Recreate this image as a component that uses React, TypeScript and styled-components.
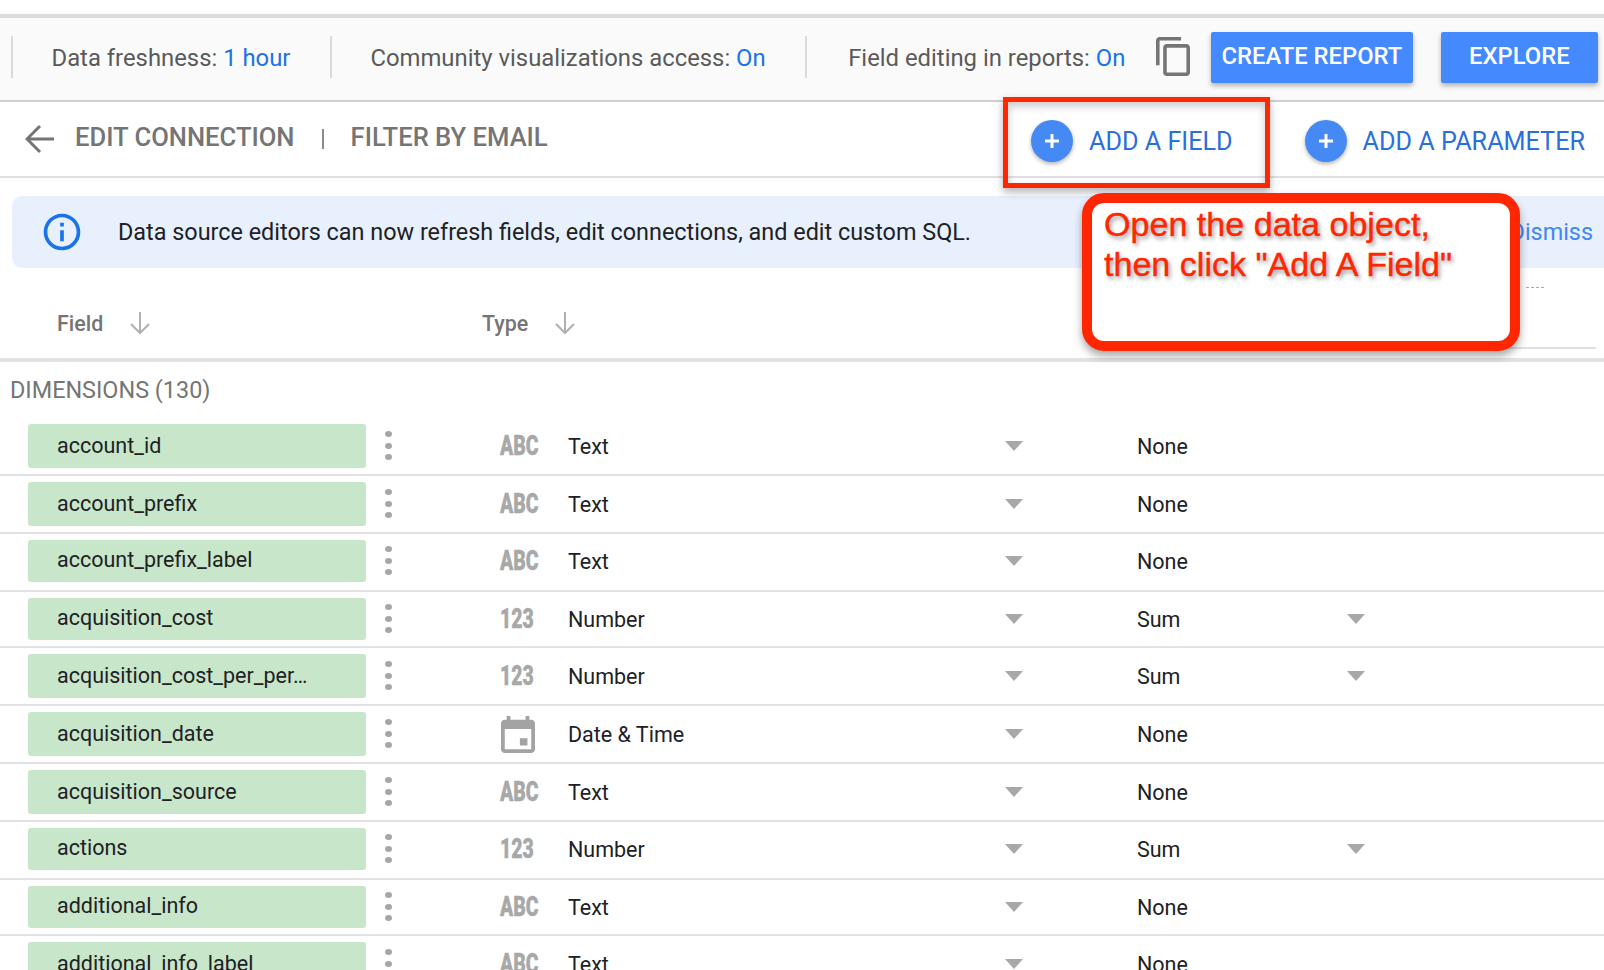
import React from "react";
import styled, { createGlobalStyle } from "styled-components";

const Global = createGlobalStyle`
  html, body { margin: 0; padding: 0; background: #fff; }
  body { font-family: Roboto, "Liberation Sans", sans-serif; overflow: hidden; }
  * { box-sizing: border-box; }
`;

const Page = styled.div`
  position: relative;
  width: 1604px;
  height: 970px;
  overflow: hidden;
  padding-top: 14px;
  background: #fff;
`;

const Toolbar = styled.div`
  display: flex;
  align-items: center;
  height: 88px;
  padding-left: 11px;
  background: #fafafa;
  border-top: 4px solid #dcdcde;
  border-bottom: 2px solid #cfcfcf;
`;

const Setting = styled.div`
  display: flex;
  align-items: center;
  height: 42px;
  margin-bottom: 4px;
  padding: 2px 39.5px 0 38.5px;
  border-left: 2px solid #dadada;
  font-size: 23.85px;
  color: #5a5a5a;
  white-space: pre;
  &:nth-of-type(3) {
    padding-left: 41px;
  }
`;

const BlueValue = styled.span`
  color: #1a73e8;
`;

const CopyIcon = styled.svg`
  width: 34px;
  height: 39px;
  margin: 0 21px 6px -9px;
  flex: none;
  fill: #757575;
`;

const PrimaryButton = styled.button<{ $width: number; $gap: number }>`
  width: ${(p) => p.$width}px;
  height: 51px;
  margin: 0 ${(p) => p.$gap}px 3px 0;
  flex: none;
  padding: 0 0 3px;
  border: 0;
  border-radius: 2px;
  background: #4589ff;
  color: #fff;
  font-family: Roboto, sans-serif;
  font-size: 23.8px;
  font-weight: 500;
  box-shadow: 0 3px 5px rgba(0, 0, 0, 0.28);
`;

const ActionBar = styled.div`
  display: flex;
  align-items: center;
  height: 76px;
  padding: 0 19px 0 25px;
  border-bottom: 2px solid #e0e0e0;
`;

const BackIcon = styled.svg`
  width: 30px;
  height: 30px;
  margin: 0 20px 0 0;
  fill: none;
  stroke: #757575;
  stroke-width: 3;
`;

const Crumb = styled.span`
  padding-bottom: 4px;
  font-size: 25.6px;
  font-weight: 500;
  color: #757575;
`;

const CrumbDivider = styled.span`
  width: 2px;
  height: 20px;
  margin: 0 27px;
  background: #8a8a8a;
`;

const AddButton = styled.div`
  display: flex;
  align-items: center;
  gap: 16px;
  margin-top: 4px;
  font-size: 25.2px;
  color: #2a6fdb;
  white-space: nowrap;
  &:first-of-type {
    margin-left: auto;
  }
  & + & {
    margin-left: 72px;
  }
`;

const AddCircle = styled.span`
  display: flex;
  align-items: center;
  justify-content: center;
  width: 42px;
  height: 42px;
  border-radius: 50%;
  background: #4589f5;
  box-shadow: 0 2px 4px rgba(0, 0, 0, 0.3);
`;

const PlusIcon = styled.svg`
  width: 14px;
  height: 14px;
  stroke: #fff;
  stroke-width: 3;
`;

const Banner = styled.div`
  display: flex;
  align-items: center;
  height: 72px;
  margin: 18px 0 0 12px;
  padding: 0 11px 0 28px;
  border-radius: 10px 0 0 10px;
  background: #e8f0fe;
  font-size: 23.4px;
  color: #202124;
`;

const InfoIcon = styled.svg`
  width: 44px;
  height: 44px;
  margin-right: 34px;
  flex: none;
  fill: #1a73e8;
`;

const Dismiss = styled.span`
  margin-left: auto;
  color: #4285f4;
`;

const TableHeader = styled.div`
  display: flex;
  height: 94px;
  padding-left: 57px;
  border-bottom: 4px solid #e2e2e2;
`;

const HeaderCell = styled.div<{ $width: number }>`
  display: flex;
  align-items: center;
  gap: 25px;
  width: ${(p) => p.$width}px;
  height: 30px;
  margin-top: 40px;
  font-size: 21.4px;
  font-weight: 500;
  color: #757575;
`;

const SortIcon = styled.svg`
  width: 24px;
  height: 24px;
  fill: none;
  stroke: #b0b0b0;
  stroke-width: 2;
`;

const SearchBox = styled.div`
  display: flex;
  justify-content: flex-end;
  align-self: stretch;
  width: 300px;
  margin: 0 8px 9px auto;
  padding: 19px 52px 0 0;
  border-bottom: 2px solid #e0e0e0;
`;

const SearchDash = styled.span`
  width: 18px;
  height: 1px;
  border-top: 1px dashed #aaa;
`;

const GroupTitle = styled.div`
  height: 56px;
  padding: 14px 0 0 10px;
  font-size: 23.4px;
  line-height: 28px;
  color: #757575;
`;

const Row = styled.div<{ $height: number }>`
  display: grid;
  grid-template-columns: 338px 44px 90px 68px 437px 132px 210px 18px;
  align-items: center;
  align-content: start;
  height: ${(p) => p.$height}px;
  padding: 6px 0 0 28px;
  border-bottom: 2px solid #e2e2e2;
  font-size: 21.5px;
  color: #202124;
`;

const FieldChip = styled.div<{ $height: number }>`
  display: flex;
  align-items: center;
  height: ${(p) => p.$height}px;
  padding: 0 0 ${(p) => (p.$height < 44 ? 4 : 2)}px 29px;
  border-radius: 3px;
  background: #c8e6c9;
`;

const MenuDots = styled.div`
  display: flex;
  flex-direction: column;
  align-items: center;
  gap: 5.5px;
  padding-bottom: 1px;
`;

const Dot = styled.span`
  width: 7px;
  height: 6px;
  border-radius: 50%;
  background: #a6a6a6;
`;

const TypeGlyph = styled.span`
  display: block;
  width: 38px;
  font-family: Roboto, sans-serif;
  font-size: 27px;
  line-height: 26px;
  font-weight: 900;
  -webkit-text-stroke: 0.4px #a8a8a8;
  color: #a8a8a8;
  transform: scaleX(0.72);
  transform-origin: left center;
  white-space: nowrap;
`;

const CalendarIcon = styled.svg`
  width: 34px;
  height: 37px;
  margin-left: 1px;
  fill: #a3a3a3;
`;

const Caret = styled.span`
  width: 0;
  height: 0;
  border-left: 9px solid transparent;
  border-right: 9px solid transparent;
  border-top: 10px solid #a8a8a8;
`;

const RedBox = styled.div`
  position: absolute;
  left: 1003px;
  top: 97px;
  width: 267px;
  height: 91px;
  border: 5px solid #ff2600;
  box-shadow: 0 4px 8px rgba(0, 0, 0, 0.3), inset 0 4px 8px rgba(0, 0, 0, 0.22);
`;

const Callout = styled.div`
  position: absolute;
  left: 1082px;
  top: 193px;
  width: 438px;
  height: 158px;
  padding: 1px 0 0 12px;
  border: 10px solid #ff2600;
  border-radius: 22px;
  background: #fff;
  box-shadow: 0 5px 9px rgba(0, 0, 0, 0.35);
  font-family: "Liberation Sans", Arial, sans-serif;
  font-size: 34.1px;
  line-height: 40px;
  color: #ff2600;
  -webkit-text-stroke: 0.4px #ff2600;
  text-shadow: 2px 3px 4px rgba(0, 0, 0, 0.4);
`;

type Kind = "text" | "number" | "date";

type Field = { name: string; kind: Kind; height: number; chip: number };

const fields: Field[] = [
  { name: "account_id", kind: "text", height: 58, chip: 44 },
  { name: "account_prefix", kind: "text", height: 58, chip: 44 },
  { name: "account_prefix_label", kind: "text", height: 58, chip: 42 },
  { name: "acquisition_cost", kind: "number", height: 56, chip: 42 },
  { name: "acquisition_cost_per_per…", kind: "number", height: 58, chip: 44 },
  { name: "acquisition_date", kind: "date", height: 58, chip: 44 },
  { name: "acquisition_source", kind: "text", height: 58, chip: 44 },
  { name: "actions", kind: "number", height: 58, chip: 42 },
  { name: "additional_info", kind: "text", height: 56, chip: 42 },
  { name: "additional_info_label", kind: "text", height: 58, chip: 44 },
];

const typeLabel: Record<Kind, string> = { text: "Text", number: "Number", date: "Date & Time" };

const Plus = () => (
  <PlusIcon viewBox="0 0 14 14">
    <path d="M7 0v14M0 7h14" />
  </PlusIcon>
);

const Sort = () => (
  <SortIcon viewBox="0 0 24 24">
    <path d="M12 1v21M3 13l9 9 9-9" />
  </SortIcon>
);

const Glyph = ({ kind }: { kind: Kind }) =>
  kind === "date" ? (
    <CalendarIcon viewBox="3 1 18 20" preserveAspectRatio="none">
      <path d="M19 3h-1V1h-2v2H8V1H6v2H5c-1.11 0-2 .9-2 2v14c0 1.1.89 2 2 2h14c1.1 0 2-.9 2-2V5c0-1.1-.9-2-2-2zm0 16H5V8h14v11zm-2-6h-4v4h4z" />
    </CalendarIcon>
  ) : (
    <TypeGlyph>{kind === "text" ? "ABC" : "123"}</TypeGlyph>
  );

export default function App() {
  return (
    <Page>
      <Global />
      <Toolbar>
        <Setting>
          Data freshness: <BlueValue>1 hour</BlueValue>
        </Setting>
        <Setting>
          Community visualizations access: <BlueValue>On</BlueValue>
        </Setting>
        <Setting>
          Field editing in reports: <BlueValue>On</BlueValue>
        </Setting>
        <CopyIcon viewBox="2 1 19 22" preserveAspectRatio="none">
          <path d="M16 1H4c-1.1 0-2 .9-2 2v14h2V3h12V1zm3 4H8c-1.1 0-2 .9-2 2v14c0 1.1.9 2 2 2h11c1.1 0 2-.9 2-2V7c0-1.1-.9-2-2-2zm0 16H8V7h11v14z" />
        </CopyIcon>
        <PrimaryButton $width={202} $gap={28}>CREATE REPORT</PrimaryButton>
        <PrimaryButton $width={157} $gap={0}>EXPLORE</PrimaryButton>
      </Toolbar>
      <ActionBar>
        <BackIcon viewBox="0 0 30 30">
          <path d="M29 15H3M15 2 2 15l13 13" />
        </BackIcon>
        <Crumb>EDIT CONNECTION</Crumb>
        <CrumbDivider />
        <Crumb>FILTER BY EMAIL</Crumb>
        <AddButton>
          <AddCircle><Plus /></AddCircle>
          ADD A FIELD
        </AddButton>
        <AddButton>
          <AddCircle><Plus /></AddCircle>
          ADD A PARAMETER
        </AddButton>
      </ActionBar>
      <Banner>
        <InfoIcon viewBox="0 0 24 24">
          <path d="M11 7h2v2h-2zm0 4h2v6h-2zm1-9C6.48 2 2 6.48 2 12s4.48 10 10 10 10-4.48 10-10S17.52 2 12 2zm0 18c-4.41 0-8-3.59-8-8s3.59-8 8-8 8 3.59 8 8-3.59 8-8 8z" />
        </InfoIcon>
        Data source editors can now refresh fields, edit connections, and edit custom SQL.
        <Dismiss>Dismiss</Dismiss>
      </Banner>
      <TableHeader>
        <HeaderCell $width={425}>Field <Sort /></HeaderCell>
        <HeaderCell $width={200}>Type <Sort /></HeaderCell>
        <SearchBox><SearchDash /></SearchBox>
      </TableHeader>
      <GroupTitle>DIMENSIONS (130)</GroupTitle>
      {fields.map((f) => (
        <Row key={f.name} $height={f.height}>
          <FieldChip $height={f.chip}>{f.name}</FieldChip>
          <MenuDots><Dot /><Dot /><Dot /></MenuDots>
          <span />
          <Glyph kind={f.kind} />
          <span>{typeLabel[f.kind]}</span>
          <Caret />
          <span>{f.kind === "number" ? "Sum" : "None"}</span>
          {f.kind === "number" ? <Caret /> : <span />}
        </Row>
      ))}
      <RedBox />
      <Callout>
        Open the data object,
        <br />
        then click "Add A Field"
      </Callout>
    </Page>
  );
}
